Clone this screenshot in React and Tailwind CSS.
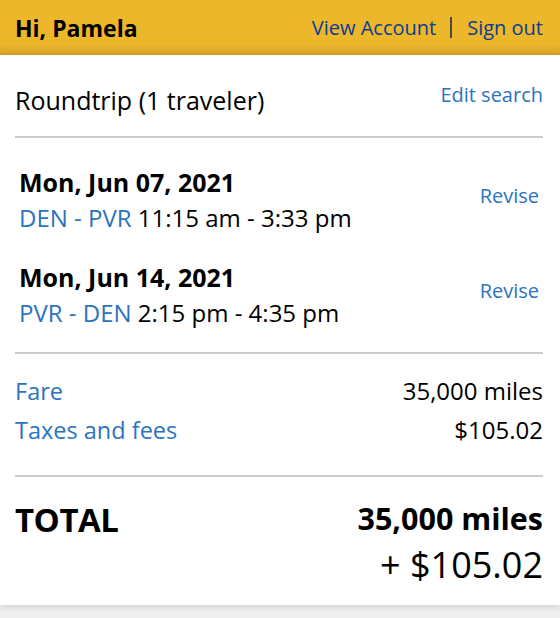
export default function App() {
  return (
    <div className="min-h-[618px] bg-[#efefef] font-['Open_Sans',sans-serif] text-black">
      {/* Header */}
      <header className="flex h-[55px] items-center justify-between bg-linear-to-b from-[#ecb72b] from-80% to-[#d4a22b] pl-[15px] pr-[17px]">
        <span className="text-[23px] font-bold leading-[32px]">Hi, Pamela</span>
        <div className="flex items-center text-[20px] leading-[30px] text-[#0b3d92]">
          <span>View Account</span>
          <span className="ml-[14px] mr-[15px] h-[21px] w-[2px] bg-[#4a4a4a]" />
          <span>Sign out</span>
        </div>
      </header>

      {/* Card */}
      <main className="bg-white pl-[15px] pr-[17px] pb-[15px] shadow-[0_2px_6px_rgba(0,0,0,0.12)]">
        <div className="flex items-start justify-between pt-[28px] pb-[19px]">
          <span className="text-[25px] leading-[34px]">Roundtrip (1 traveler)</span>
          <span className="text-[20px] leading-[24px] text-[#2a73bf]">Edit search</span>
        </div>
        <hr className="border-t-2 border-[#cccccc]" />

        <div className="flex flex-col gap-[25px] pt-[27px] pb-[22px] pl-[4px] pr-[4px]">
          <Segment date="Mon, Jun 07, 2021" route="DEN - PVR" time="11:15 am - 3:33 pm" />
          <Segment date="Mon, Jun 14, 2021" route="PVR - DEN" time="2:15 pm - 4:35 pm" />
        </div>
        <hr className="border-t-2 border-[#cccccc]" />

        <div className="flex flex-col gap-[5px] pt-[20px] pb-[28px]">
          <div className="flex items-center justify-between leading-[34px]">
            <span className="text-[23.5px] text-[#2a73bf]">Fare</span>
            <span className="text-[24px]">35,000 miles</span>
          </div>
          <div className="flex items-center justify-between leading-[34px]">
            <span className="text-[23.5px] text-[#2a73bf]">Taxes and fees</span>
            <span className="text-[24px]">$105.02</span>
          </div>
        </div>
        <hr className="border-t-2 border-[#cccccc]" />

        <div className="flex items-start justify-between pt-[19px]">
          <span className="text-[33px] font-bold leading-[48px] tracking-[-0.5px]">TOTAL</span>
          <div className="flex flex-col items-end">
            <span className="text-[30.5px] font-bold leading-[44px]">35,000 miles</span>
            <span className="text-[36px] leading-[50px]">+ $105.02</span>
          </div>
        </div>
      </main>
    </div>
  );
}

function Segment({ date, route, time }) {
  return (
    <div className="flex items-center justify-between">
      <div className="flex flex-col">
        <span className="text-[25px] font-bold leading-[35px]">{date}</span>
        <span className="text-[24px] leading-[35px]">
          <span className="text-[#2a73bf]">{route}</span> {time}
        </span>
      </div>
      <span className="pb-[9px] text-[20px] text-[#2a73bf]">Revise</span>
    </div>
  );
}
